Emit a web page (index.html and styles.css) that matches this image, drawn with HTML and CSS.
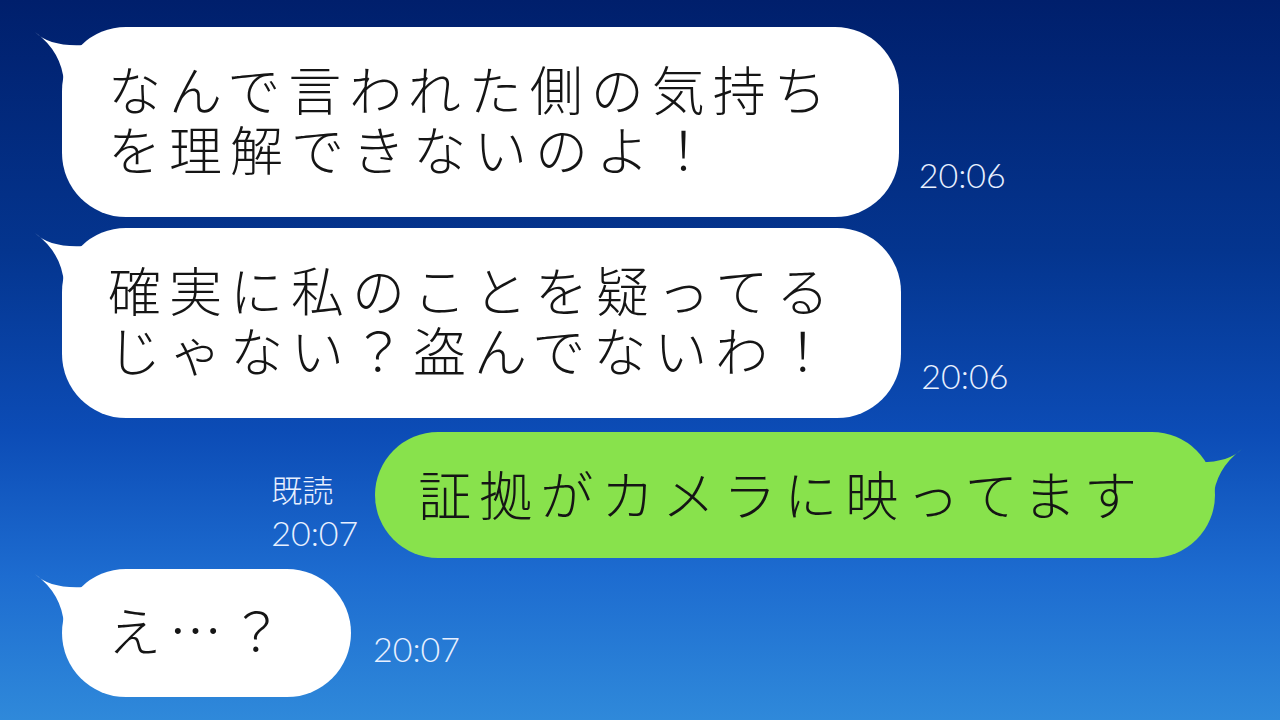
FILE: index.html
```html
<!DOCTYPE html>
<html lang="ja">
<head>
  <meta charset="UTF-8" />
  <title>トーク</title>
  <link rel="stylesheet" href="styles.css">
</head>
<body>
  <div class="chat">

    <div class="row left">
      <div class="bubble white">
        <svg class="tail" viewBox="0 0 60 60"><path d="M3 5 Q18 20 52 18 L52 56 L32 56 Q30 25 3 5 Z"/></svg>
        <p>なんで言われた側の気持ち<br>を理解できないのよ！</p>
      </div>
      <div class="time">20:06</div>
    </div>

    <div class="row left">
      <div class="bubble white">
        <svg class="tail" viewBox="0 0 60 60"><path d="M3 5 Q18 20 52 18 L52 56 L32 56 Q30 25 3 5 Z"/></svg>
        <p>確実に私のことを疑ってる<br>じゃない？盗んでないわ！</p>
      </div>
      <div class="time">20:06</div>
    </div>

    <div class="row right">
      <div class="read">
        <span>既読</span>
        <span class="read-time">20:07</span>
      </div>
      <div class="bubble green">
        <svg class="tail" viewBox="0 0 60 60"><path d="M3 5 Q18 20 52 18 L52 56 L32 56 Q30 25 3 5 Z"/></svg>
        <p>証拠がカメラに映ってます</p>
      </div>
    </div>

    <div class="row left">
      <div class="bubble white small">
        <svg class="tail" viewBox="0 0 60 60"><path d="M3 5 Q18 20 52 18 L52 56 L32 56 Q30 25 3 5 Z"/></svg>
        <p>え…？</p>
      </div>
      <div class="time low">20:07</div>
    </div>

  </div>
</body>
</html>
```

FILE: styles.css
```css
body {
  margin: 0;
  height: 720px;
  overflow: hidden;
  background: linear-gradient(180deg, #001f6c 0%, #04358f 35%, #0c4cb6 60%, #1d6cd0 80%, #2f89da 100%);
  font-family: "Noto Sans CJK JP", "Noto Sans", sans-serif;
}
.chat {
  display: flex;
  flex-direction: column;
  gap: 11px;
  padding-top: 27px;
}
.row {
  display: flex;
  align-items: flex-end;
}
.row.left {
  padding-left: 62px;
}
.row.right {
  justify-content: flex-end;
  padding-right: 65px;
  margin-top: 3px;
}
.bubble {
  position: relative;
  border-radius: 64px;
  padding: 31px 64px 39px 46px;
}
.bubble p {
  margin: 0;
  position: relative;
  font-size: 53px;
  font-weight: 300;
  line-height: 60px;
  letter-spacing: 8px;
  color: #151515;
  white-space: nowrap;
}
.white {
  background-color: #ffffff;
}
.white .tail {
  fill: #ffffff;
}
.green {
  background-color: #88e24c;
  padding: 31px 70px 35px 43px;
}
.green .tail {
  fill: #88e24c;
  left: auto;
  right: -30px;
  top: 12px;
  transform: scaleX(-1);
}
.small {
  padding: 30px 60px 38px 46px;
}
.tail {
  position: absolute;
  left: -30px;
  top: 0;
  width: 60px;
  height: 60px;
}
.time {
  color: #e8f0ff;
  font-family: Lato, "Noto Sans", sans-serif;
  font-weight: 300;
  font-size: 34px;
  line-height: 40px;
  margin-left: 20px;
  margin-bottom: 22px;
}
.time.low {
  margin-left: 22px;
  margin-bottom: 28px;
}
.read {
  display: flex;
  flex-direction: column;
  color: #e8f0ff;
  font-size: 31px;
  line-height: 42px;
  font-weight: 300;
  margin-right: 17px;
  margin-bottom: 2px;
}
.read-time {
  font-family: Lato, "Noto Sans", sans-serif;
  font-size: 34px;
  line-height: 46px;
}
```
